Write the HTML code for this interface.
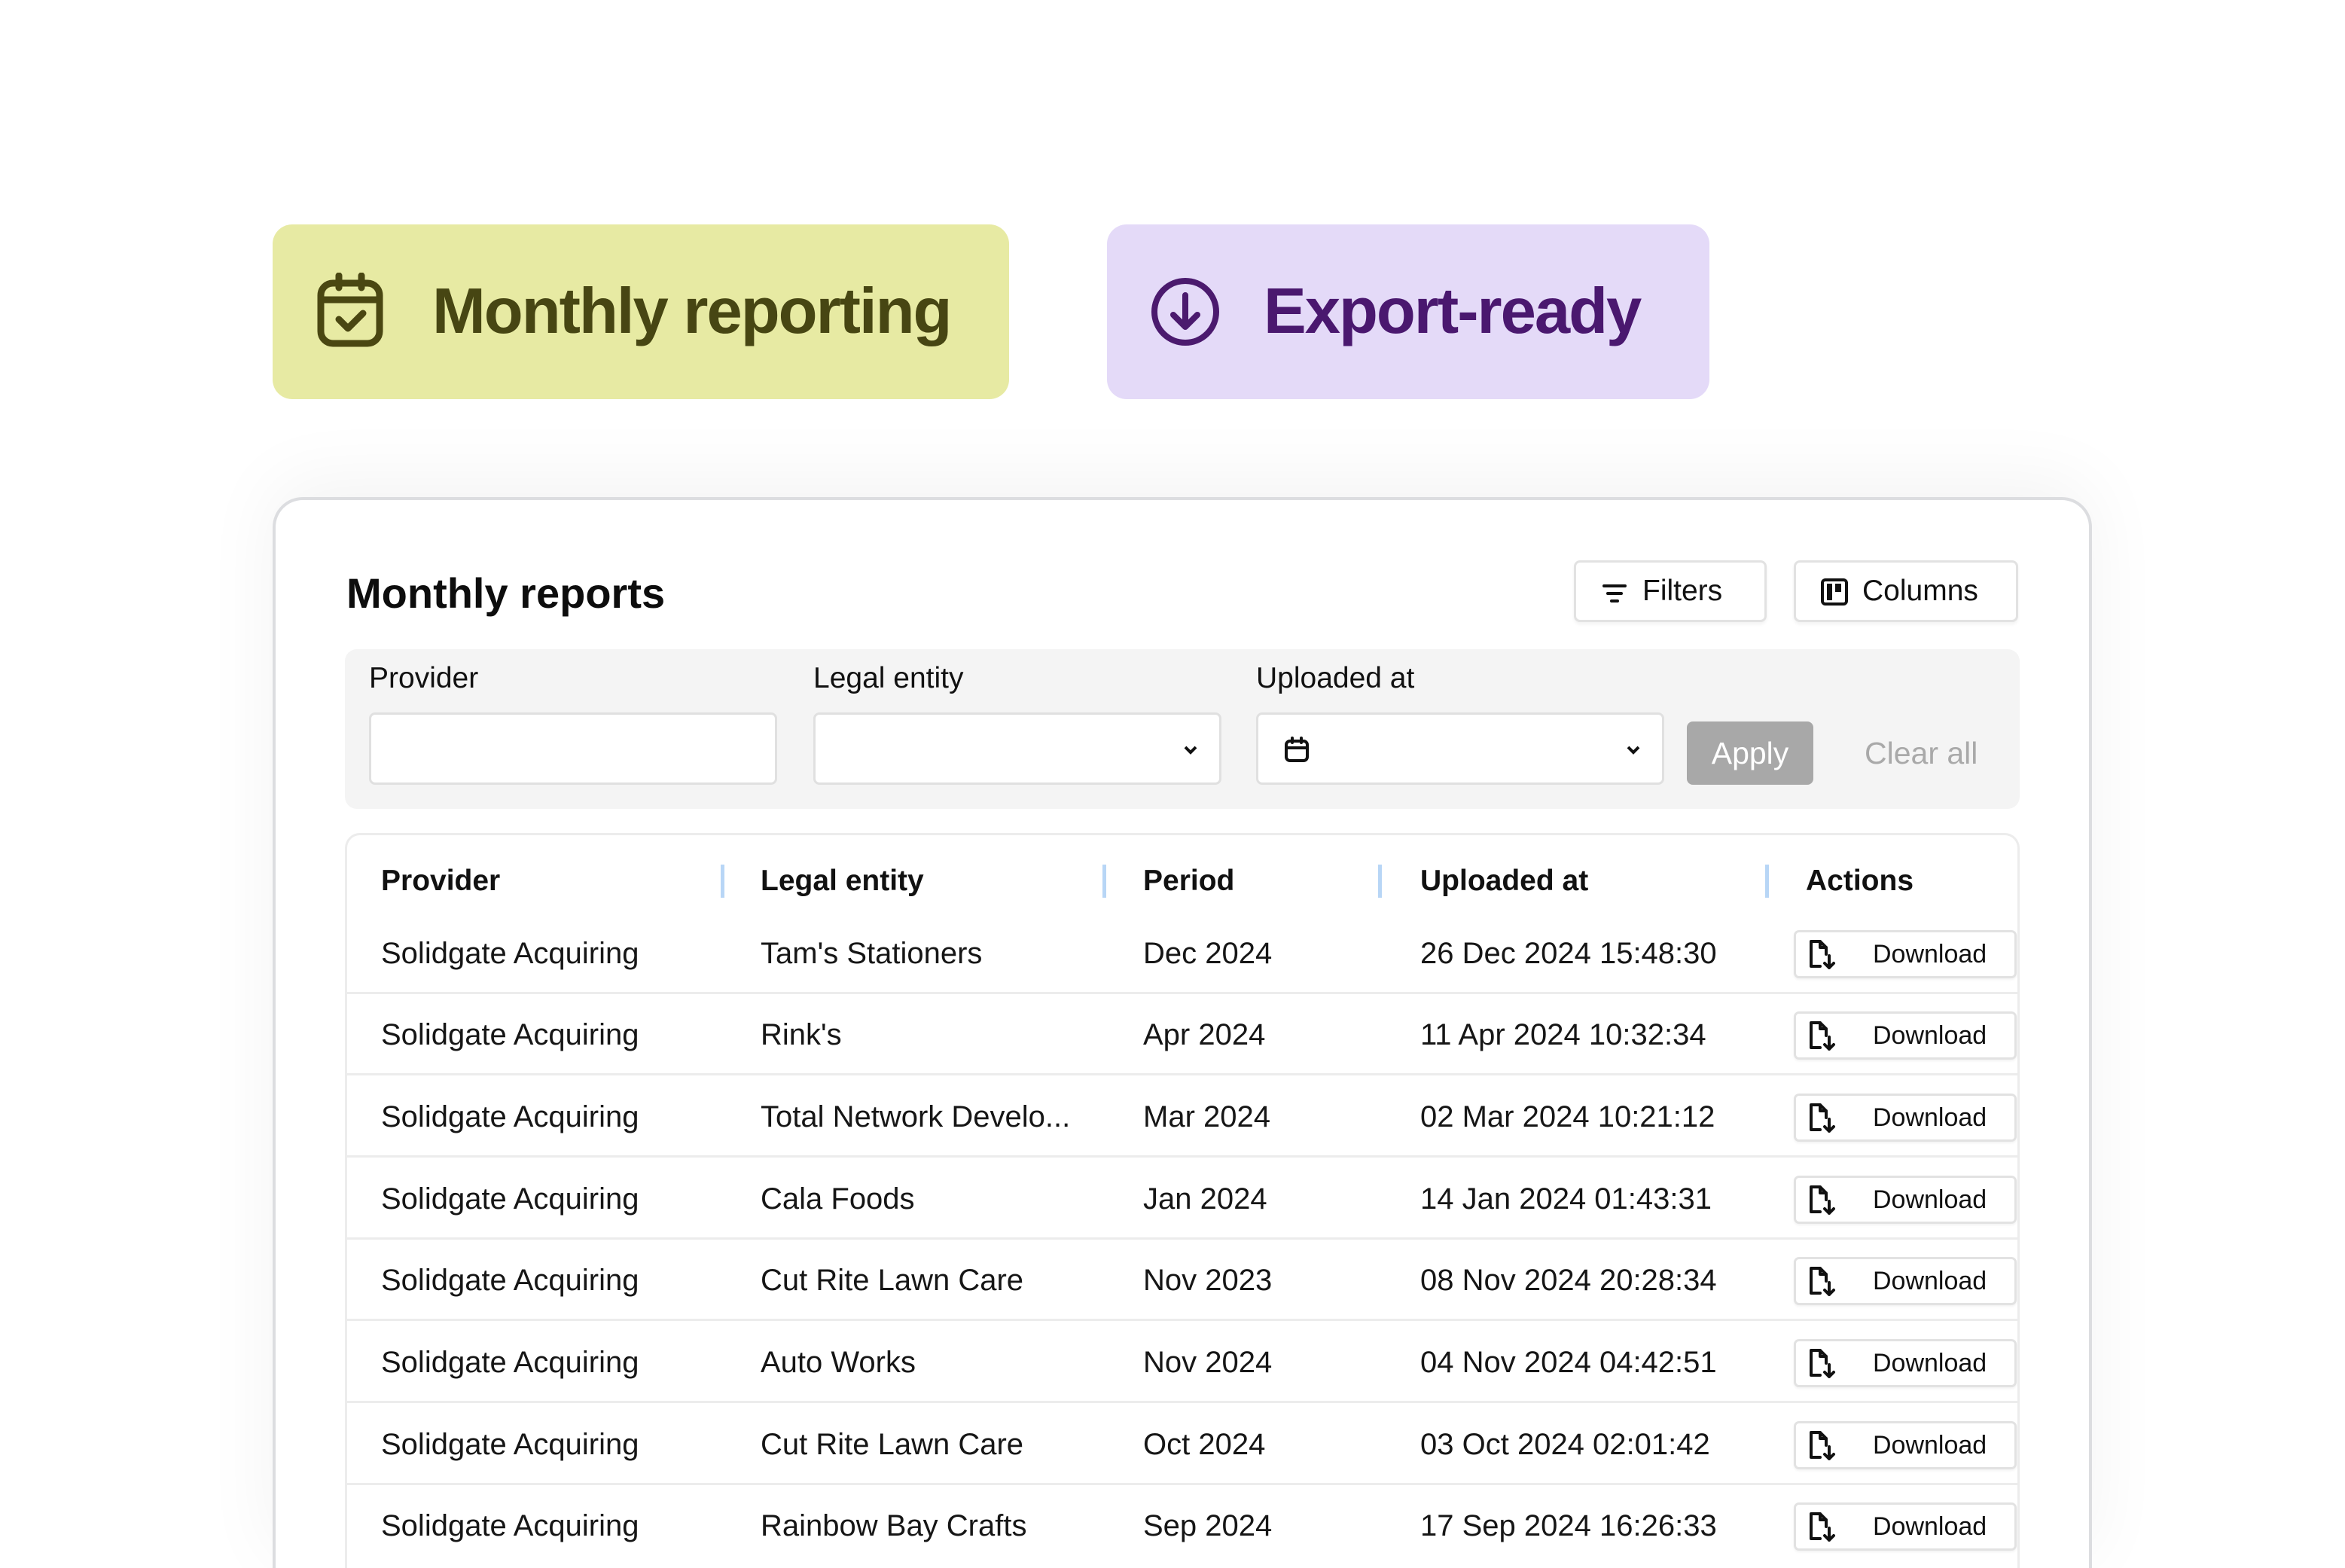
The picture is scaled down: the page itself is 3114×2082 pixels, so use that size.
<!DOCTYPE html>
<html><head><meta charset="utf-8"><style>
*{margin:0;padding:0;box-sizing:border-box}
html,body{width:3114px;height:2082px;overflow:hidden}
body{background:#fff;font-family:"Liberation Sans",sans-serif;color:#111;position:relative}
#w{position:absolute;left:0;top:0;width:3114px;height:2082px;overflow:hidden}
.a{position:absolute}
.pill{position:absolute;top:298px;height:232px;border-radius:26px}
.pt{position:absolute;top:0;line-height:232px;font-size:85px;font-weight:bold;letter-spacing:-2px}
.card{left:362px;top:660px;width:2416px;height:1422px;border:4px solid #dcdde0;border-bottom:none;border-radius:40px 40px 0 0;background:#fff;box-shadow:0 -20px 100px rgba(0,0,0,0.05)}
.btn{position:absolute;top:744px;height:82px;border:3px solid #e2e2e2;border-radius:8px;background:#fff;font-size:39px;line-height:76px;box-shadow:0 3px 4px rgba(0,0,0,0.05)}
.lbl{position:absolute;top:876px;font-size:39px;line-height:50px}
.inp{position:absolute;top:946px;height:96px;width:542px;background:#fff;border:3px solid #e0e0e0;border-radius:8px}
.th{position:absolute;top:1146px;font-size:39px;font-weight:bold;line-height:48px}
.sep{position:absolute;top:1148px;width:5px;height:44px;background:#b8d6f6}
.row{position:absolute;left:460px;width:2220px;height:108px;border-bottom:3px solid #ececec}
.c{position:absolute;top:0;line-height:108px;font-size:40px;color:#161616}
.dl{position:absolute;left:1922px;top:23px;width:296px;height:64px;border:3px solid #e2e2e2;border-radius:7px;box-shadow:0 2px 3px rgba(0,0,0,0.05);background:#fff}
.dl span{position:absolute;left:102px;top:0;line-height:58px;font-size:34px;color:#111}
.dl svg{position:absolute;left:14px;top:9px}
</style></head><body><div id="w">
<div class="pill" style="left:362px;width:978px;background:#e7eaa3">
<svg class="a" style="left:58px;top:64px" width="92" height="100" viewBox="0 0 92 100" fill="none" stroke="#4a4712" stroke-width="9" stroke-linecap="round" stroke-linejoin="round"><rect x="6" y="14" width="78" height="80" rx="16"/><path d="M6 36H84M30 4V20M60 4V20M30 62L42 74L62 54"/></svg>
<div class="pt" style="left:212px;color:#474613">Monthly reporting</div></div>
<div class="pill" style="left:1470px;width:800px;background:#e4daf8">
<svg class="a" style="left:56px;top:68px" width="96" height="96" viewBox="0 0 96 96" fill="none" stroke="#4b1a6e" stroke-width="8" stroke-linecap="round" stroke-linejoin="round"><circle cx="48" cy="48" r="41"/><path d="M48 26V68M32 52L48 68L64 52"/></svg>
<div class="pt" style="left:208px;color:#4a186f">Export-ready</div></div>

<div class="a card"></div>
<div class="a" style="left:460px;top:748px;font-size:56px;font-weight:bold;line-height:80px;color:#0d0d0d">Monthly reports</div>
<div class="btn" style="left:2090px;width:256px"><svg class="a" style="left:34px;top:26px" width="34" height="30" viewBox="0 0 34 30" stroke="#111" stroke-width="4" stroke-linecap="round"><path d="M3 5H31M8 15H26M13 25H21"/></svg><span class="a" style="left:88px">Filters</span></div>
<div class="btn" style="left:2382px;width:298px"><svg class="a" style="left:32px;top:20px" width="38" height="38" viewBox="0 0 38 38" fill="none" stroke="#111" stroke-width="4"><rect x="3" y="3" width="32" height="32" rx="4"/><rect x="9" y="8" width="7" height="22" fill="#111" stroke="none"/><rect x="20" y="8" width="8" height="11" fill="#111" stroke="none"/></svg><span class="a" style="left:88px">Columns</span></div>

<div class="a" style="left:458px;top:862px;width:2224px;height:212px;background:#f4f4f4;border-radius:16px"></div>
<div class="lbl" style="left:490px">Provider</div>
<div class="lbl" style="left:1080px">Legal entity</div>
<div class="lbl" style="left:1668px">Uploaded at</div>
<div class="inp" style="left:490px"></div>
<div class="inp" style="left:1080px"><svg class="a" style="left:488px;top:40px" width="20" height="14" viewBox="0 0 20 14" fill="none" stroke="#111" stroke-width="4"><path d="M3 3L10 10L17 3"/></svg></div>
<div class="inp" style="left:1668px"><svg class="a" style="left:34px;top:28px" width="34" height="36" viewBox="0 0 34 36" fill="none" stroke="#111" stroke-width="4" stroke-linecap="round"><rect x="3" y="7" width="28" height="26" rx="5"/><path d="M3 16H31M11 3V9M23 3V9"/></svg><svg class="a" style="left:488px;top:40px" width="20" height="14" viewBox="0 0 20 14" fill="none" stroke="#111" stroke-width="4"><path d="M3 3L10 10L17 3"/></svg></div>
<div class="a" style="left:2240px;top:958px;width:168px;height:84px;background:#a8a8a8;border-radius:8px;color:#fff;font-size:41px;line-height:84px;text-align:center">Apply</div>
<div class="a" style="left:2476px;top:958px;font-size:41px;line-height:84px;color:#a9a9a9">Clear all</div>

<div class="a" style="left:458px;top:1106px;width:2224px;height:976px;border:3px solid #ececec;border-bottom:none;border-radius:20px 20px 0 0"></div>
<div class="th" style="left:506px">Provider</div>
<div class="th" style="left:1010px">Legal entity</div>
<div class="th" style="left:1518px">Period</div>
<div class="th" style="left:1886px">Uploaded at</div>
<div class="th" style="left:2398px">Actions</div>
<div class="sep" style="left:957px"></div><div class="sep" style="left:1464px"></div><div class="sep" style="left:1830px"></div><div class="sep" style="left:2344px"></div>

<div class="row" style="top:1212px"><div class="c" style="left:46px">Solidgate Acquiring</div><div class="c" style="left:550px">Tam's Stationers</div><div class="c" style="left:1058px">Dec 2024</div><div class="c" style="left:1426px">26 Dec 2024 15:48:30</div><div class="dl"><svg width="40" height="42" viewBox="0 0 40 42" fill="none" stroke="#111" stroke-width="4" stroke-linecap="round" stroke-linejoin="round"><path d="M18 36H6V3H18L26 11V20M18 3V11H26M30 22V38M24 32L30 38L36 32"/></svg><span>Download</span></div></div>
<div class="row" style="top:1320px"><div class="c" style="left:46px">Solidgate Acquiring</div><div class="c" style="left:550px">Rink's</div><div class="c" style="left:1058px">Apr 2024</div><div class="c" style="left:1426px">11 Apr 2024 10:32:34</div><div class="dl"><svg width="40" height="42" viewBox="0 0 40 42" fill="none" stroke="#111" stroke-width="4" stroke-linecap="round" stroke-linejoin="round"><path d="M18 36H6V3H18L26 11V20M18 3V11H26M30 22V38M24 32L30 38L36 32"/></svg><span>Download</span></div></div>
<div class="row" style="top:1429px"><div class="c" style="left:46px">Solidgate Acquiring</div><div class="c" style="left:550px">Total Network Develo...</div><div class="c" style="left:1058px">Mar 2024</div><div class="c" style="left:1426px">02 Mar 2024 10:21:12</div><div class="dl"><svg width="40" height="42" viewBox="0 0 40 42" fill="none" stroke="#111" stroke-width="4" stroke-linecap="round" stroke-linejoin="round"><path d="M18 36H6V3H18L26 11V20M18 3V11H26M30 22V38M24 32L30 38L36 32"/></svg><span>Download</span></div></div>
<div class="row" style="top:1538px"><div class="c" style="left:46px">Solidgate Acquiring</div><div class="c" style="left:550px">Cala Foods</div><div class="c" style="left:1058px">Jan 2024</div><div class="c" style="left:1426px">14 Jan 2024 01:43:31</div><div class="dl"><svg width="40" height="42" viewBox="0 0 40 42" fill="none" stroke="#111" stroke-width="4" stroke-linecap="round" stroke-linejoin="round"><path d="M18 36H6V3H18L26 11V20M18 3V11H26M30 22V38M24 32L30 38L36 32"/></svg><span>Download</span></div></div>
<div class="row" style="top:1646px"><div class="c" style="left:46px">Solidgate Acquiring</div><div class="c" style="left:550px">Cut Rite Lawn Care</div><div class="c" style="left:1058px">Nov 2023</div><div class="c" style="left:1426px">08 Nov 2024 20:28:34</div><div class="dl"><svg width="40" height="42" viewBox="0 0 40 42" fill="none" stroke="#111" stroke-width="4" stroke-linecap="round" stroke-linejoin="round"><path d="M18 36H6V3H18L26 11V20M18 3V11H26M30 22V38M24 32L30 38L36 32"/></svg><span>Download</span></div></div>
<div class="row" style="top:1755px"><div class="c" style="left:46px">Solidgate Acquiring</div><div class="c" style="left:550px">Auto Works</div><div class="c" style="left:1058px">Nov 2024</div><div class="c" style="left:1426px">04 Nov 2024 04:42:51</div><div class="dl"><svg width="40" height="42" viewBox="0 0 40 42" fill="none" stroke="#111" stroke-width="4" stroke-linecap="round" stroke-linejoin="round"><path d="M18 36H6V3H18L26 11V20M18 3V11H26M30 22V38M24 32L30 38L36 32"/></svg><span>Download</span></div></div>
<div class="row" style="top:1864px"><div class="c" style="left:46px">Solidgate Acquiring</div><div class="c" style="left:550px">Cut Rite Lawn Care</div><div class="c" style="left:1058px">Oct 2024</div><div class="c" style="left:1426px">03 Oct 2024 02:01:42</div><div class="dl"><svg width="40" height="42" viewBox="0 0 40 42" fill="none" stroke="#111" stroke-width="4" stroke-linecap="round" stroke-linejoin="round"><path d="M18 36H6V3H18L26 11V20M18 3V11H26M30 22V38M24 32L30 38L36 32"/></svg><span>Download</span></div></div>
<div class="row" style="top:1972px;height:110px;border-bottom:none"><div class="c" style="left:46px">Solidgate Acquiring</div><div class="c" style="left:550px">Rainbow Bay Crafts</div><div class="c" style="left:1058px">Sep 2024</div><div class="c" style="left:1426px">17 Sep 2024 16:26:33</div><div class="dl"><svg width="40" height="42" viewBox="0 0 40 42" fill="none" stroke="#111" stroke-width="4" stroke-linecap="round" stroke-linejoin="round"><path d="M18 36H6V3H18L26 11V20M18 3V11H26M30 22V38M24 32L30 38L36 32"/></svg><span>Download</span></div></div>
</div></body></html>
